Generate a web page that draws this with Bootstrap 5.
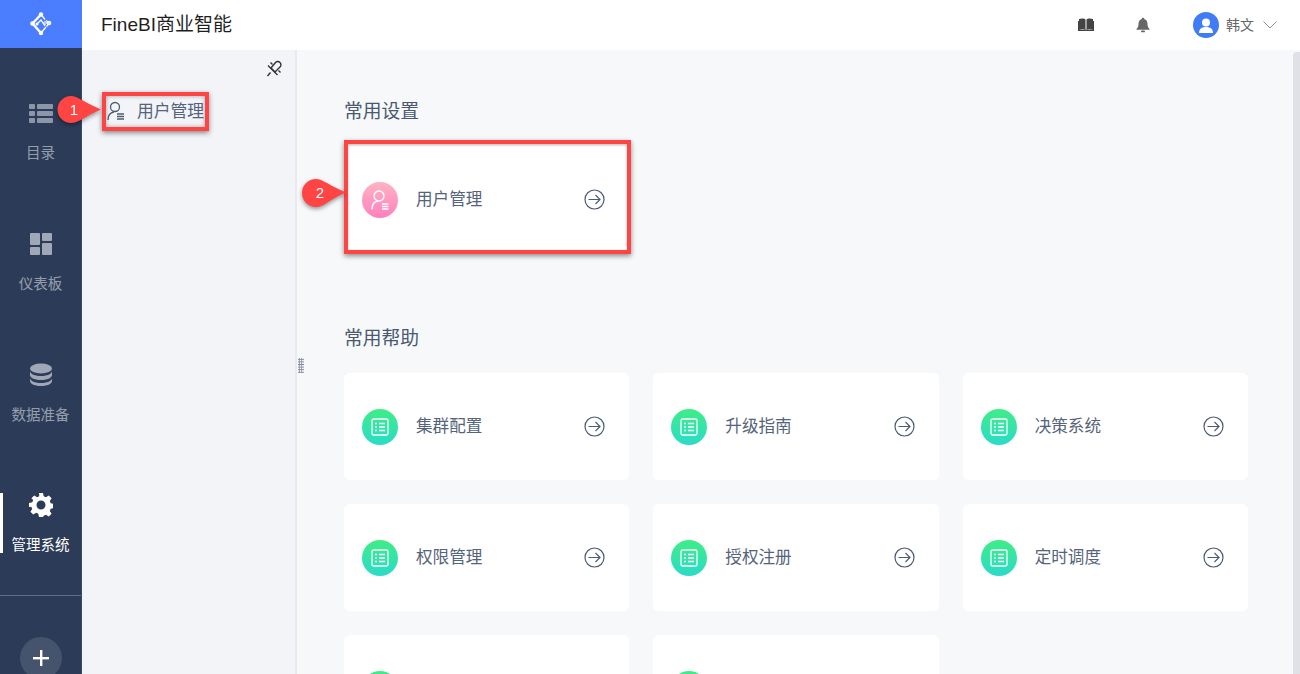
<!DOCTYPE html>
<html lang="zh">
<head>
<meta charset="utf-8">
<title>FineBI</title>
<link href="https://cdn.jsdelivr.net/npm/bootstrap@5.3.0/dist/css/bootstrap.min.css" rel="stylesheet">
<style>
html,body{height:100%;overflow:hidden}
body{font-family:"Liberation Sans","Noto Sans CJK SC",sans-serif;background:#f7f8fa;color:#3d4d66}
.app-shell{width:1300px;height:674px;overflow:hidden;position:relative}
.rail{width:82px;background:#2c3c58;flex:none;height:674px;border-right:1px solid #3a4a66}
.rail-logo{height:48px;background:#4a7dff;width:82px}
.rail-item{height:131px;padding-top:53px;color:rgba(255,255,255,.5);font-size:14.500px;text-align:center}
.rail-inner{height:60px}
.rail-inner svg{display:block;margin:0 auto}
.rail-label{line-height:18px;margin-top:19px;white-space:nowrap}
.rail-active{color:#fff}
.rail-active .rail-inner{box-shadow:inset 3px 0 0 #fff}
.rail-rule{height:1px;background:rgba(255,255,255,.25);margin-top:23px}
.rail-add{width:42px;height:42px;border-radius:50%;background:rgba(255,255,255,.12);margin:41px auto 0}
.topbar{height:50px;background:#fff;padding-left:19px;padding-right:23px}
.brand-name{font-size:19px;color:#1f1f1f}
.user-name{font-size:14px;color:#666;margin-left:7px;margin-right:9px}
.avatar{width:26px;height:26px;border-radius:50%;background:#3f7cf6}
.subpanel{width:215px;flex:none;background:#f2f4f8;border-right:2px solid #e8eaf0;height:624px;position:relative}
.pin-row{height:38px;padding-right:12px;padding-top:10px}
.sub-item{height:46px;padding-left:25px;font-size:16.800px;color:#55637b}
.sub-item svg{margin-right:12px}
.sub-item span{padding-top:2px}
.drag-grip{position:absolute;right:-9px;top:308px;width:6px;height:15px;background-image:radial-gradient(#7f8898 .9px,transparent 1px);background-size:2.500px 2.600px}
.main-pane{flex:1;padding:49px 52px 0 47px;height:624px;overflow:hidden;position:relative}
.sec-title{font-size:18.800px;line-height:26px;color:#4a5870;margin:0 0 21px;font-weight:400}
.sec-gap{margin-top:73px}
.tile-grid{display:grid;grid-template-columns:repeat(3,1fr);gap:24px}
.tile{height:107px;border:0;border-radius:6px;background:#fff;flex-direction:row;align-items:center;padding:0 24px 0 18px}
.tile-dot{width:36px;height:36px;border-radius:50%;flex:none;background:linear-gradient(180deg,#3fed86,#2adbc9)}
.tile-pink{background:linear-gradient(180deg,#ffb3c4,#ff80bd)}
.tile-name{font-size:16.600px;color:#55637b;margin-left:18px;flex:1;padding-top:2px}
.scroll-thumb{position:absolute;right:0;top:52px;width:7px;height:622px;background:#dfe1e6;border-radius:4px 0 0 0}
.mark-box{position:absolute;border:4px solid #ff4444;box-shadow:0 2px 5px rgba(0,0,0,.45),inset 0 0 4px rgba(0,0,0,.35);pointer-events:none}
.mark-one{left:102px;top:92px;width:107px;height:39px}
.mark-two{left:344px;top:140px;width:287px;height:114px;box-shadow:0 2px 5px rgba(0,0,0,.45),inset 0 1px 3px rgba(0,0,0,.25)}
.mark-tag{position:absolute;width:46px;height:32px;filter:drop-shadow(0 2px 2px rgba(0,0,0,.4))}
.mark-tag span{position:absolute;left:2px;top:0;width:32px;text-align:center;line-height:28px;color:#fff;font-size:15px}
.tag-one{left:57px;top:96px}
.tag-one span{left:1px}
.tag-two{left:302px;top:179px}
</style>
</head>
<body>
<div class="app-shell d-flex">
  <aside class="rail">
    <div class="rail-logo d-flex align-items-center justify-content-center">
      <svg width="24" height="24" viewBox="0 0 24 24" fill="none" stroke="#fff"><path stroke-width="2.400" d="M12 2.500 3.500 11.500 12 21"/><path stroke-width="1.300" d="M12 2.500 16 7.500M12 21l5-6M8 12l4-4 4 6M17 8.500l3.500 2.500-3 3.500"/><g fill="#fff" stroke="none"><circle cx="12" cy="2.500" r="2.200"/><circle cx="3.500" cy="11.500" r="2.300"/><circle cx="12" cy="21" r="2.200"/><circle cx="8" cy="12" r="1.500"/></g><circle cx="20" cy="11" r="1.700" stroke-width="1.200"/><circle cx="16" cy="11" r="1.300" stroke-width="1"/></svg>
    </div>
    <div class="rail-item"><div class="rail-inner">
      <svg width="24" height="24" viewBox="0 0 24 24" fill="#8d96a8"><rect x="0" y="3" width="6" height="5" rx="1"/><rect x="0" y="10" width="6" height="5" rx="1"/><rect x="0" y="17" width="6" height="5" rx="1"/><rect x="8" y="3" width="16" height="5" rx="1"/><rect x="8" y="10" width="16" height="5" rx="1"/><rect x="8" y="17" width="16" height="5" rx="1"/></svg>
      <div class="rail-label">目录</div></div></div>
    <div class="rail-item"><div class="rail-inner">
      <svg width="24" height="24" viewBox="0 0 24 24" fill="#a0a7b6"><rect x="1" y="1" width="10" height="12" rx="1"/><rect x="13" y="1" width="10" height="8" rx="1"/><rect x="1" y="15" width="10" height="8" rx="1"/><rect x="13" y="11" width="10" height="12" rx="1"/></svg>
      <div class="rail-label">仪表板</div></div></div>
    <div class="rail-item"><div class="rail-inner">
      <svg width="24" height="24" viewBox="0 0 24 24" fill="#a0a7b6"><ellipse cx="12" cy="5.500" rx="11" ry="5"/><path d="M1 8.500c1 3 5.500 4.500 11 4.500s10-1.500 11-4.500v4c-1 3-5.500 4.500-11 4.500S2 15.500 1 12.500z"/><path d="M1 15.500c1 3 5.500 4.500 11 4.500s10-1.500 11-4.500v3c-1 3-5.500 4.500-11 4.500S2 21.500 1 18.500z"/></svg>
      <div class="rail-label">数据准备</div></div></div>
    <div class="rail-item rail-active"><div class="rail-inner">
      <svg width="24" height="24" viewBox="0 0 24 24" fill="#fff" style="margin-top:-1px;margin-bottom:1px"><path fill-rule="evenodd" d="M10 0h4l.7 3.300 2.200.9L19.800 2.400l2.800 2.800-1.800 2.900.9 2.200 3.300.7v4l-3.300.7-.9 2.200 1.800 2.900-2.800 2.800-2.900-1.800-2.200.9L14 24h-4l-.7-3.300-2.200-.9-2.900 1.800-2.800-2.800 1.800-2.900-.9-2.200L0 14v-4l3.300-.7.900-2.200L2.400 5.200l2.800-2.800 2.900 1.800 2.200-.9zM12 7.500a4.500 4.500 0 1 0 0 9 4.500 4.500 0 0 0 0-9z"/></svg>
      <div class="rail-label">管理系统</div></div></div>
    <div class="rail-rule"></div>
    <div class="rail-add d-flex align-items-center justify-content-center">
      <svg width="18" height="18" viewBox="0 0 18 18" fill="#fff"><rect x="8" y="1" width="2.400" height="16"/><rect x="1" y="8" width="16" height="2.400"/></svg>
    </div>
  </aside>

  <div class="flex-grow-1 d-flex flex-column">
    <header class="topbar d-flex align-items-center">
      <div class="brand-name flex-grow-1">FineBI商业智能</div>
      <div class="d-flex align-items-center">
        <svg width="16" height="14" viewBox="0 0 16 14" fill="#444" style="margin-right:42px"><path d="M1 1c2.500-.8 5.200-.8 6.500.5V12C6 11 3.500 11 1 12zM15 1c-2.500-.8-5.200-.8-6.500.5V12c1.500-1 4-1 6.500 0z"/><path d="M0 3v10h16V3h-1v8.800H1V3z"/></svg>
        <svg width="14" height="16" viewBox="0 0 14 16" fill="#666" style="margin-right:43px"><path d="M7 .8a1.200 1.200 0 0 1 1.200 1.300C10.500 2.700 11.500 4.700 11.500 7c0 2.500.7 3.700 2 5v.8H.5V12c1.300-1.300 2-2.500 2-5 0-2.300 1-4.300 3.300-4.900A1.200 1.200 0 0 1 7 .8z"/><rect x="5" y="13.500" width="4" height="1.800" rx=".9"/></svg>
        <div class="avatar d-flex align-items-center justify-content-center">
          <svg width="14" height="15" viewBox="0 0 14 15" fill="#fff"><circle cx="7" cy="4.500" r="4"/><path d="M0 15c0-4 2.500-6 7-6s7 2 7 6z"/></svg>
        </div>
        <span class="user-name">韩文</span>
        <svg width="14" height="8" viewBox="0 0 14 8" fill="none" stroke="#8a8f99" stroke-width="1"><path d="M.5 .5 7 7 13.500 .5"/></svg>
      </div>
    </header>
    <div class="d-flex flex-grow-1">
      <nav class="subpanel">
        <div class="pin-row d-flex justify-content-end">
          <svg width="18" height="18" viewBox="0 0 18 18" fill="none" stroke="#333" stroke-width="1.400"><path d="M10.500 2.500a2.800 2.800 0 0 1 4.500 4.500L10 12 6 8z"/><path d="M3 5.500 12.500 15M5.500 12.500 2.500 16M5.500 2.500l2 2M15.500 12.500l-2-2"/></svg>
        </div>
        <div class="sub-item d-flex align-items-center">
          <svg width="18" height="20" viewBox="0 0 18 20" fill="none" stroke="#4c5b75" stroke-width="1.300"><circle cx="8" cy="6" r="4.500"/><path d="M1 19c0-5 2.500-7.500 6-8"/><path d="M10 13h7M10 15.500h7M10 18h7"/></svg>
          <span>用户管理</span>
        </div>
        <div class="drag-grip"></div>
      </nav>
      <main class="main-pane">
        <h2 class="sec-title">常用设置</h2>
        <div class="tile-grid">
          <div class="card tile"><div class="tile-dot tile-pink d-flex align-items-center justify-content-center">
            <svg width="20" height="22" viewBox="0 0 20 22" fill="none" stroke="#fff" stroke-width="1.400"><circle cx="9" cy="7" r="5"/><path d="M2 20.500c0-5 2.500-8 6-8.500"/><path d="M12 15h6.500M12 17.500h6.500M12 20h6.500"/></svg>
          </div><span class="tile-name">用户管理</span>
          <svg width="21" height="21" viewBox="0 0 21 21" fill="none" stroke="#4c5b75" stroke-width="1.200"><circle cx="10.500" cy="10.500" r="9.500"/><path d="M4.500 10.500h11.500M11.500 6l4.500 4.500-4.500 4.500"/></svg></div>
        </div>
        <h2 class="sec-title sec-gap">常用帮助</h2>
        <div class="tile-grid">
          <div class="card tile"><div class="tile-dot d-flex align-items-center justify-content-center"><svg width="18" height="18" viewBox="0 0 18 18" fill="none" stroke="#fff" stroke-width="1.300"><rect x="1" y="1" width="16" height="16" rx="1.500"/><path d="M4 5.500h2M8 5.500h6M4 9h2M8 9h6M4 12.500h2M8 12.500h6"/></svg></div><span class="tile-name">集群配置</span><svg width="21" height="21" viewBox="0 0 21 21" fill="none" stroke="#4c5b75" stroke-width="1.200"><circle cx="10.500" cy="10.500" r="9.500"/><path d="M4.500 10.500h11.500M11.500 6l4.500 4.500-4.500 4.500"/></svg></div>
          <div class="card tile"><div class="tile-dot d-flex align-items-center justify-content-center"><svg width="18" height="18" viewBox="0 0 18 18" fill="none" stroke="#fff" stroke-width="1.300"><rect x="1" y="1" width="16" height="16" rx="1.500"/><path d="M4 5.500h2M8 5.500h6M4 9h2M8 9h6M4 12.500h2M8 12.500h6"/></svg></div><span class="tile-name">升级指南</span><svg width="21" height="21" viewBox="0 0 21 21" fill="none" stroke="#4c5b75" stroke-width="1.200"><circle cx="10.500" cy="10.500" r="9.500"/><path d="M4.500 10.500h11.500M11.500 6l4.500 4.500-4.500 4.500"/></svg></div>
          <div class="card tile"><div class="tile-dot d-flex align-items-center justify-content-center"><svg width="18" height="18" viewBox="0 0 18 18" fill="none" stroke="#fff" stroke-width="1.300"><rect x="1" y="1" width="16" height="16" rx="1.500"/><path d="M4 5.500h2M8 5.500h6M4 9h2M8 9h6M4 12.500h2M8 12.500h6"/></svg></div><span class="tile-name">决策系统</span><svg width="21" height="21" viewBox="0 0 21 21" fill="none" stroke="#4c5b75" stroke-width="1.200"><circle cx="10.500" cy="10.500" r="9.500"/><path d="M4.500 10.500h11.500M11.500 6l4.500 4.500-4.500 4.500"/></svg></div>
          <div class="card tile"><div class="tile-dot d-flex align-items-center justify-content-center"><svg width="18" height="18" viewBox="0 0 18 18" fill="none" stroke="#fff" stroke-width="1.300"><rect x="1" y="1" width="16" height="16" rx="1.500"/><path d="M4 5.500h2M8 5.500h6M4 9h2M8 9h6M4 12.500h2M8 12.500h6"/></svg></div><span class="tile-name">权限管理</span><svg width="21" height="21" viewBox="0 0 21 21" fill="none" stroke="#4c5b75" stroke-width="1.200"><circle cx="10.500" cy="10.500" r="9.500"/><path d="M4.500 10.500h11.500M11.500 6l4.500 4.500-4.500 4.500"/></svg></div>
          <div class="card tile"><div class="tile-dot d-flex align-items-center justify-content-center"><svg width="18" height="18" viewBox="0 0 18 18" fill="none" stroke="#fff" stroke-width="1.300"><rect x="1" y="1" width="16" height="16" rx="1.500"/><path d="M4 5.500h2M8 5.500h6M4 9h2M8 9h6M4 12.500h2M8 12.500h6"/></svg></div><span class="tile-name">授权注册</span><svg width="21" height="21" viewBox="0 0 21 21" fill="none" stroke="#4c5b75" stroke-width="1.200"><circle cx="10.500" cy="10.500" r="9.500"/><path d="M4.500 10.500h11.500M11.500 6l4.500 4.500-4.500 4.500"/></svg></div>
          <div class="card tile"><div class="tile-dot d-flex align-items-center justify-content-center"><svg width="18" height="18" viewBox="0 0 18 18" fill="none" stroke="#fff" stroke-width="1.300"><rect x="1" y="1" width="16" height="16" rx="1.500"/><path d="M4 5.500h2M8 5.500h6M4 9h2M8 9h6M4 12.500h2M8 12.500h6"/></svg></div><span class="tile-name">定时调度</span><svg width="21" height="21" viewBox="0 0 21 21" fill="none" stroke="#4c5b75" stroke-width="1.200"><circle cx="10.500" cy="10.500" r="9.500"/><path d="M4.500 10.500h11.500M11.500 6l4.500 4.500-4.500 4.500"/></svg></div>
          <div class="card tile"><div class="tile-dot"></div></div>
          <div class="card tile"><div class="tile-dot"></div></div>
        </div>
      </main>
    </div>
  </div>

  <div class="scroll-thumb"></div>
  <div class="mark-box mark-one"></div>
  <div class="mark-box mark-two"></div>
  <div class="mark-tag tag-one">
    <svg width="46" height="32" viewBox="0 0 46 32"><path d="M14 0C20 0 23 4 44 13.500 28 20 22 27 14 27A13.500 13.500 0 0 1 14 0z" fill="#ff4444"/></svg>
    <span>1</span>
  </div>
  <div class="mark-tag tag-two">
    <svg width="46" height="32" viewBox="0 0 46 32"><path d="M14 0C20 0 23 4 44 13.500 28 20 22 28 14 28A14 14 0 0 1 14 0z" fill="#ff4444"/></svg>
    <span>2</span>
  </div>
</div>
<script src="https://cdn.jsdelivr.net/npm/bootstrap@5.3.0/dist/js/bootstrap.bundle.min.js"></script>
</body>
</html>
